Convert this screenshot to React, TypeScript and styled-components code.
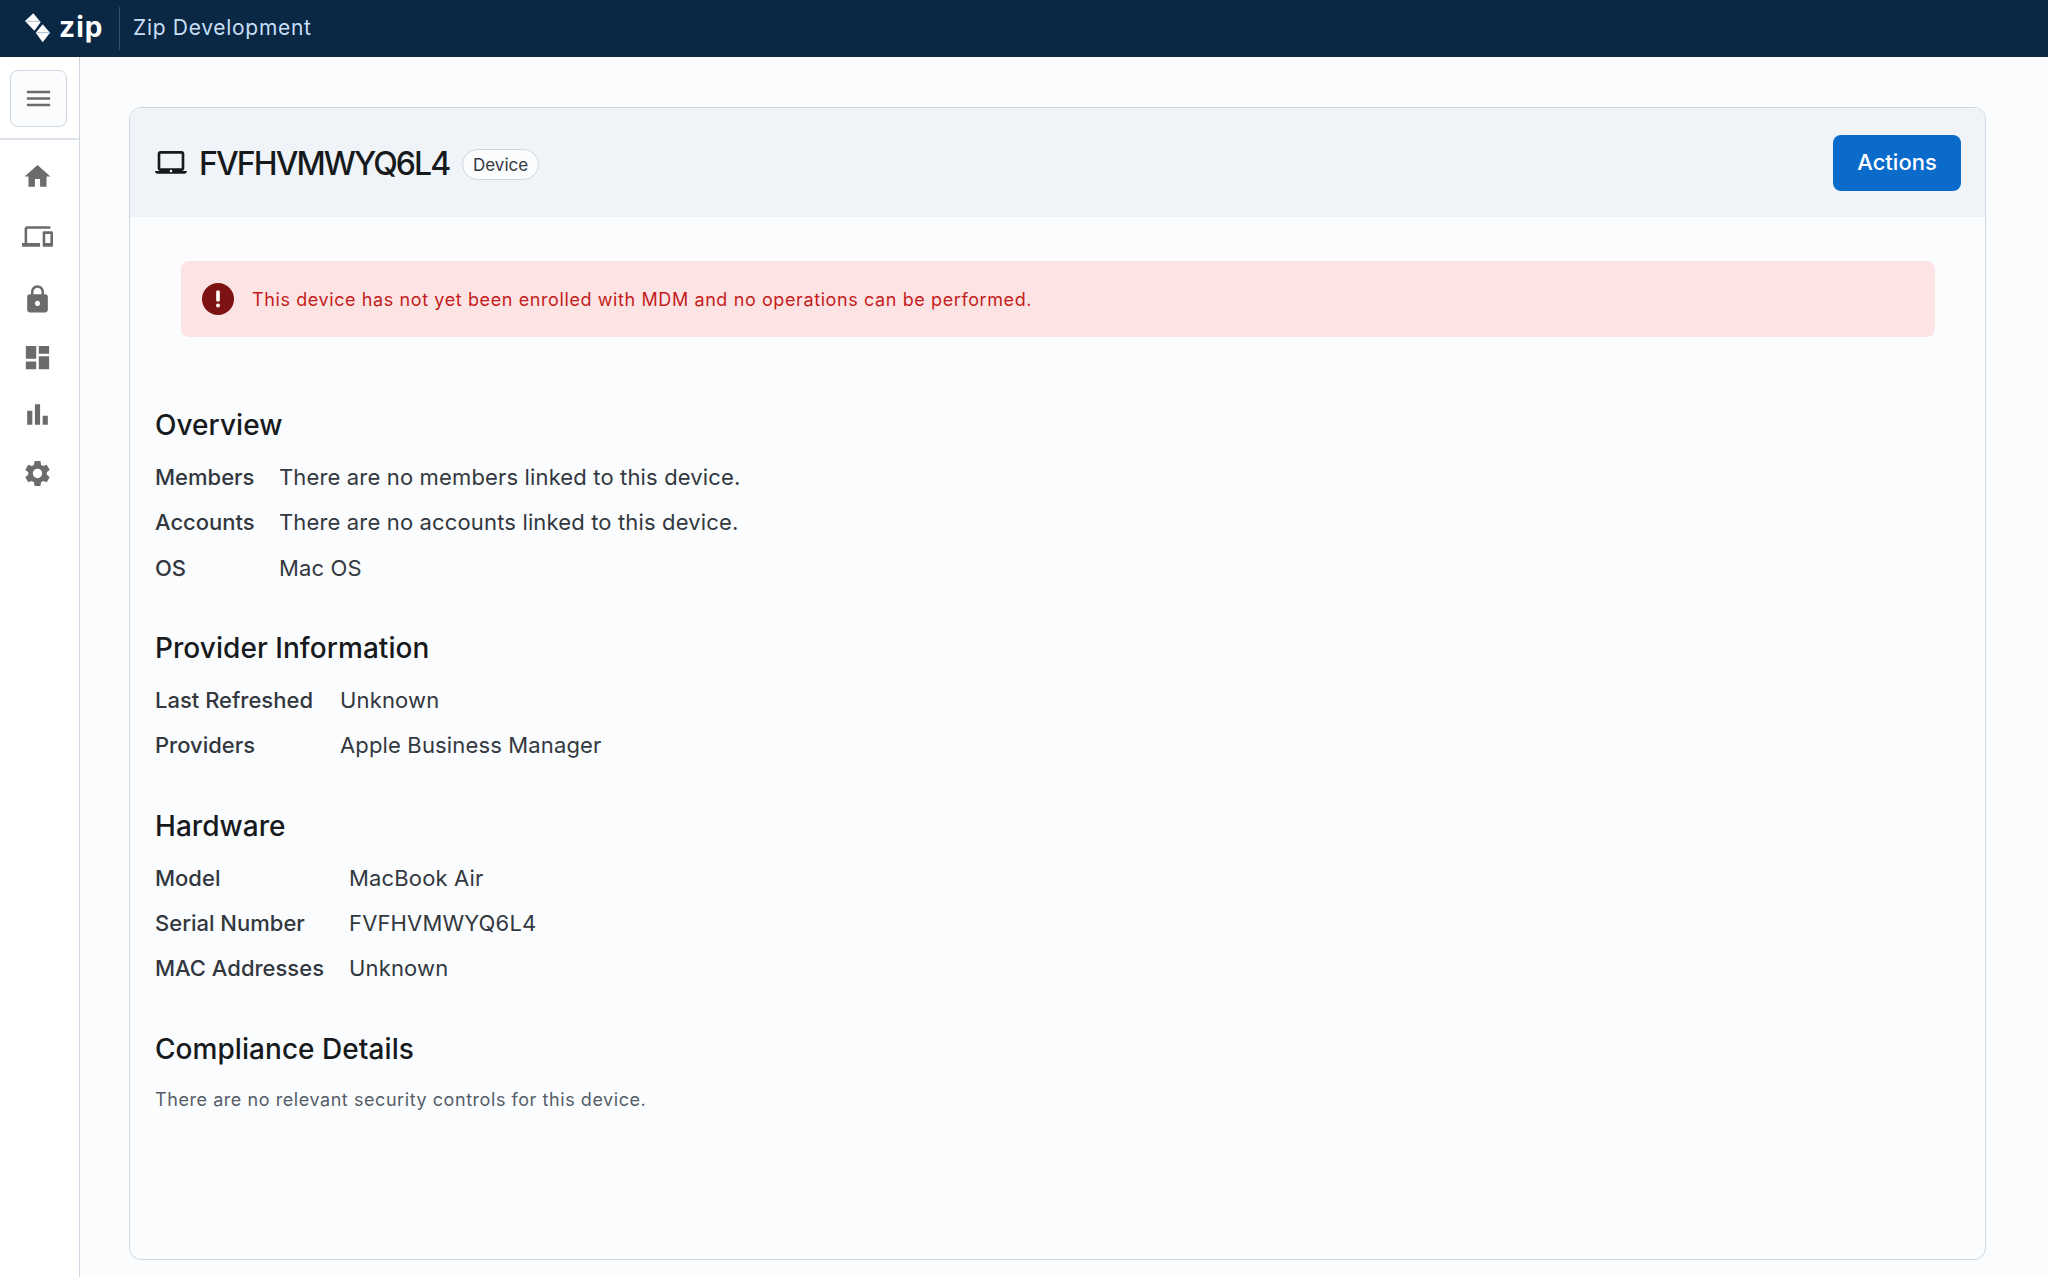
import React from 'react';
import styled, { createGlobalStyle } from 'styled-components';

const Global = createGlobalStyle`
  html, body { margin: 0; padding: 0; height: 100%; }
  body { font-family: Inter, "Liberation Sans", sans-serif; background: #fbfcfe; color: #32383e; }
  * { box-sizing: border-box; }
`;

const Page = styled.div`
  display: flex;
  flex-direction: column;
  height: 1277px;
  overflow: hidden;
`;

const TopBar = styled.header`
  display: flex;
  align-items: center;
  height: 57px;
  flex: none;
  padding: 0 0 3px 24px;
  background: #0a2744;
`;

const LogoMark = styled.svg`
  width: 26px;
  height: 31px;
  flex: none;
`;

const LogoWord = styled.span`
  margin-left: 9px;
  width: 44px;
  font-size: 28px;
  font-weight: 700;
  line-height: 30px;
  letter-spacing: 1.1px;
  color: #fff;
`;

const TopDivider = styled.span`
  width: 1px;
  height: 43px;
  margin: 3px 13px 0 16px;
  background: #34506c;
`;

const Workspace = styled.span`
  font-size: 21px;
  letter-spacing: 0.7px;
  color: #c7dff7;
`;

const Body = styled.div`
  display: flex;
  flex: 1;
  min-height: 0;
`;

const Sidebar = styled.nav`
  width: 80px;
  flex: none;
  background: #fff;
  border-right: 1px solid #cdd7e1;
`;

const MenuArea = styled.div`
  height: 83px;
  padding: 13px 10px;
  border-bottom: 2px solid #dde3eb;
`;

const MenuButton = styled.button`
  display: flex;
  align-items: center;
  justify-content: center;
  width: 57px;
  height: 57px;
  padding: 0;
  border: 1px solid #cdd7e1;
  border-radius: 8px;
  background: #fbfcfe;
`;

const NavList = styled.div`
  display: flex;
  flex-direction: column;
  padding: 0 0 0 22px;
`;

const NavIcon = styled.svg<{ $top: number }>`
  display: block;
  width: 31px;
  height: 31px;
  margin-top: ${p => p.$top}px;
  fill: #6b6b6b;
`;

const Main = styled.main`
  flex: 1;
  min-width: 0;
  padding: 50px 62px 17px 49px;
`;

const Card = styled.section`
  height: 100%;
  border: 1px solid #cdd7e1;
  border-radius: 12px;
  overflow: hidden;
`;

const CardHeader = styled.div`
  display: flex;
  align-items: center;
  height: 109px;
  padding: 0 24px 0 25px;
  background: #f0f4f8;
`;

const LaptopIcon = styled.svg`
  width: 32px;
  height: 32px;
  fill: #171a1c;
  flex: none;
`;

const Title = styled.h1`
  margin: 2px 0 0 12px;
  font-size: 32px;
  font-weight: 500;
  letter-spacing: -1.9px;
  color: #171a1c;
`;

const Chip = styled.span`
  margin: 4px 0 0 13px;
  height: 31px;
  padding: 0 9.5px;
  display: inline-flex;
  align-items: center;
  border: 1px solid #cdd7e1;
  border-radius: 16px;
  background: #fbfcfe;
  font-size: 17px;
  letter-spacing: 0.05px;
  color: #32383e;
`;

const ActionButton = styled.button`
  margin-left: auto;
  width: 128px;
  height: 56px;
  padding: 0 0 2px;
  border: none;
  border-radius: 8px;
  background: #0b6bcb;
  color: #fff;
  font-family: inherit;
  font-size: 22px;
  font-weight: 500;
`;

const CardBody = styled.div`
  padding: 44px 25px 0;
`;

const Alert = styled.div`
  display: flex;
  align-items: center;
  height: 76px;
  margin: 0 25px 0 26px;
  padding: 0 21px;
  border-radius: 8px;
  background: #fce4e4;
`;

const AlertIcon = styled.svg`
  width: 32px;
  height: 32px;
  flex: none;
`;

const AlertText = styled.span`
  margin-left: 18px;
  font-size: 18px;
  letter-spacing: 0.6px;
  color: #c41c1c;
`;

const Section = styled.div<{ $top: number }>`
  margin-top: ${p => p.$top}px;
`;

const Heading = styled.h2`
  margin: 0 0 19px;
  height: 38px;
  font-size: 28px;
  line-height: 38px;
  font-weight: 500;
  letter-spacing: 0.05px;
  color: #171a1c;
`;

const Rows = styled.dl<{ $labelWidth: number }>`
  display: grid;
  grid-template-columns: ${p => p.$labelWidth}px 1fr;
  row-gap: 17.3px;
  margin: 0;
`;

const Label = styled.dt`
  font-size: 22px;
  line-height: 28px;
  font-weight: 500;
  color: #32383e;
`;

const Value = styled.dd`
  margin: 0;
  font-size: 22px;
  line-height: 28px;
  letter-spacing: 0.15px;
  color: #32383e;
`;

const Note = styled.p`
  margin: 0;
  font-size: 18px;
  line-height: 25px;
  letter-spacing: 0.56px;
  color: #555e68;
`;

type Row = [string, string];

const sections: { title: string; top: number; width: number; rows: Row[] }[] = [
  { title: 'Overview', top: 69, width: 124, rows: [['Members', 'There are no members linked to this device.'], ['Accounts', 'There are no accounts linked to this device.'], ['OS', 'Mac OS']] },
  { title: 'Provider Information', top: 47, width: 185, rows: [['Last Refreshed', 'Unknown'], ['Providers', 'Apple Business Manager']] },
  { title: 'Hardware', top: 48, width: 194, rows: [['Model', 'MacBook Air'], ['Serial Number', 'FVFHVMWYQ6L4'], ['MAC Addresses', 'Unknown']] },
];

const navItems: { top: number; d: string }[] = [
  { top: 21, d: 'M10 20v-6h4v6h5v-8h3L12 3 2 12h3v8z' },
  { top: 29, d: 'M4 6h18V4H4c-1.1 0-2 .9-2 2v11H0v3h14v-3H4V6zm19 2h-6c-.55 0-1 .45-1 1v10c0 .55.45 1 1 1h6c.55 0 1-.45 1-1V9c0-.55-.45-1-1-1zm-1 9h-4v-7h4v7z' },
  { top: 31.5, d: 'M18 8h-1V6c0-2.76-2.24-5-5-5S7 3.24 7 6v2H6c-1.1 0-2 .9-2 2v10c0 1.1.9 2 2 2h12c1.1 0 2-.9 2-2V10c0-1.1-.9-2-2-2zm-6 9c-1.1 0-2-.9-2-2s.9-2 2-2 2 .9 2 2-.9 2-2 2zm3.1-9H8.9V6c0-1.71 1.39-3.1 3.1-3.1 1.71 0 3.1 1.39 3.1 3.1v2z' },
  { top: 27.5, d: 'M3 13h8V3H3v10zm0 8h8v-6H3v6zm10 0h8V11h-8v10zm0-18v6h8V3h-8z' },
  { top: 25.5, d: 'M4 9h4v11H4zm12 4h4v7h-4zm-6-9h4v16h-4z' },
  { top: 28, d: 'M19.14 12.94c.04-.3.06-.61.06-.94 0-.32-.02-.64-.07-.94l2.03-1.58c.18-.14.23-.41.12-.61l-1.92-3.32c-.12-.22-.37-.29-.59-.22l-2.39.96c-.5-.38-1.03-.7-1.62-.94l-.36-2.54c-.04-.24-.24-.41-.48-.41h-3.84c-.24 0-.43.17-.47.41l-.36 2.54c-.59.24-1.13.57-1.62.94l-2.39-.96c-.22-.08-.47 0-.59.22L2.74 8.87c-.12.21-.08.47.12.61l2.03 1.58c-.05.3-.09.63-.09.94s.02.64.07.94l-2.03 1.58c-.18.14-.23.41-.12.61l1.92 3.32c.12.22.37.29.59.22l2.39-.96c.5.38 1.03.7 1.62.94l.36 2.54c.05.24.24.41.48.41h3.84c.24 0 .44-.17.47-.41l.36-2.54c.59-.24 1.13-.56 1.62-.94l2.39.96c.22.08.47 0 .59-.22l1.92-3.32c.12-.22.07-.47-.12-.61l-2.01-1.58zM12 15.6c-1.98 0-3.6-1.62-3.6-3.6s1.62-3.6 3.6-3.6 3.6 1.62 3.6 3.6-1.62 3.6-3.6 3.6z' },
];

export default function App() {
  return (
    <Page>
      <Global />
      <TopBar>
        <LogoMark viewBox="0 0 26 31">
          <path d="M9.3 1.3L1 9l9.3 9.7L16.7 10.3z" fill="#fff" />
          <path d="M18.7 12.3L11.7 20.7L18.7 30.3L26 20.7z" fill="#fff" />
          <path d="M1.5 9.3H16.2M12.2 20.7H25.5" stroke="#a9bccf" strokeWidth="1" fill="none" />
        </LogoMark>
        <LogoWord>zip</LogoWord>
        <TopDivider />
        <Workspace>Zip Development</Workspace>
      </TopBar>
      <Body>
        <Sidebar>
          <MenuArea>
            <MenuButton aria-label="Menu">
              <svg width="31" height="31" viewBox="0 0 24 24" fill="#6b6b6b"><path d="M3 18h18v-2H3v2zm0-5h18v-2H3v2zm0-7v2h18V6H3z" /></svg>
            </MenuButton>
          </MenuArea>
          <NavList>
            {navItems.map(item => (
              <NavIcon key={item.d} $top={item.top} viewBox="0 0 24 24"><path d={item.d} /></NavIcon>
            ))}
          </NavList>
        </Sidebar>
        <Main>
          <Card>
            <CardHeader>
              <LaptopIcon viewBox="0 0 24 24"><path d="M20 18c1.1 0 1.99-.9 1.99-2L22 5c0-1.1-.9-2-2-2H4c-1.1 0-2 .9-2 2v11c0 1.1.9 2 2 2H0c0 1.1.9 2 2 2h20c1.1 0 2-.9 2-2h-4zM4 5h16v11H4V5zm8 14c-.55 0-1-.45-1-1s.45-1 1-1 1 .45 1 1-.45 1-1 1z" /></LaptopIcon>
              <Title>FVFHVMWYQ6L4</Title>
              <Chip>Device</Chip>
              <ActionButton>Actions</ActionButton>
            </CardHeader>
            <CardBody>
              <Alert>
                <AlertIcon viewBox="0 0 32 32">
                  <circle cx="16" cy="16" r="16" fill="#7d1212" />
                  <rect x="14.2" y="7.5" width="3.6" height="11" rx="1.2" fill="#fff" />
                  <circle cx="16" cy="22.5" r="2" fill="#fff" />
                </AlertIcon>
                <AlertText>This device has not yet been enrolled with MDM and no operations can be performed.</AlertText>
              </Alert>
              {sections.map(s => (
                <Section key={s.title} $top={s.top}>
                  <Heading>{s.title}</Heading>
                  <Rows $labelWidth={s.width}>
                    {s.rows.map(([k, v]) => (
                      <React.Fragment key={k}>
                        <Label>{k}</Label>
                        <Value>{v}</Value>
                      </React.Fragment>
                    ))}
                  </Rows>
                </Section>
              ))}
              <Section $top={48}>
                <Heading>Compliance Details</Heading>
                <Note>There are no relevant security controls for this device.</Note>
              </Section>
            </CardBody>
          </Card>
        </Main>
      </Body>
    </Page>
  );
}
